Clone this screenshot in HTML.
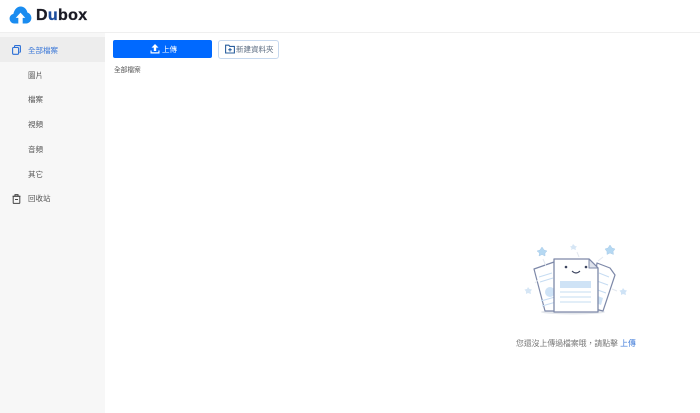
<!DOCTYPE html>
<html>
<head>
<meta charset="utf-8">
<style>
html,body{margin:0;padding:0;width:700px;height:413px;overflow:hidden;background:#fff;font-family:"Liberation Sans","Noto Sans CJK TC",sans-serif}
.abs{position:absolute;white-space:nowrap}
#header{position:absolute;left:0;top:0;width:700px;height:32px;background:#fff;border-bottom:1px solid #efefef;box-sizing:content-box}
#side{position:absolute;left:0;top:33px;width:105px;height:380px;background:#f7f7f7}
#active{position:absolute;left:0;top:37px;width:105px;height:25px;background:#ededed}
.nav{position:absolute;left:28px;font-size:7.500px;line-height:12px;color:#555;white-space:nowrap}
#btn{position:absolute;left:113px;top:40px;width:99px;height:18px;background:#0069ff;border-radius:2px}
#btn2{position:absolute;left:218px;top:40px;width:59px;height:17px;border:1px solid #c6d8ee;border-radius:3px;background:#fff}
</style>
</head>
<body>
<div id="header"></div>
<svg class="abs" style="left:9px;top:6px" width="23" height="18" viewBox="0 0 23 19">
<path d="M5 18.500C2 18.500 0 16 0 13.200C0 10.600 1.800 8.800 4 8.300C5 3.500 8 0.500 11.700 0.500C15.300 0.500 18 3.200 18.800 6.800C21.200 7.500 23 9.800 23 12.600C23 16 20.500 18.500 17.500 18.500Z" fill="#1a8cf0"/>
<path d="M11.500 7L16.500 12.500H13.800V19H9.200V12.500H6.500Z" fill="#fff"/>
</svg>
<div class="abs" style="left:36px;top:5px;font-size:16px;line-height:21px;font-weight:bold;letter-spacing:.35px;color:#1a1a24;-webkit-text-stroke:.3px #1a1a24">D<span style="color:#1f4f9e;-webkit-text-stroke:.3px #1f4f9e">u</span>box</div>
<div id="side"></div>
<div id="active"></div>
<svg class="abs" style="left:12px;top:45px" width="9" height="10" viewBox="0 0 9 10" fill="none" stroke="#2b6fd6" stroke-width="1.100">
<rect x=".6" y="2.500" width="6" height="6.800" rx="1"/>
<path d="M2.500 2.300V1.500Q2.500.6 3.400.6H7.500Q8.400.6 8.400 1.500V6.500Q8.400 7.300 7.400 7.300"/>
</svg>
<div class="nav" style="top:45px;color:#3b78d8">全部檔案</div>
<div class="nav" style="top:70px">圖片</div>
<div class="nav" style="top:94px">檔案</div>
<div class="nav" style="top:119px">視頻</div>
<div class="nav" style="top:144px">音頻</div>
<div class="nav" style="top:169px">其它</div>
<svg class="abs" style="left:12px;top:194px" width="9" height="10" viewBox="0 0 9 10" fill="none" stroke="#444" stroke-width="1">
<path d="M.5 2.200H8.500M3 2V.6H6V2"/>
<rect x="1.200" y="2.200" width="6.600" height="7.200" rx=".8"/>
<path d="M3 5.500H6"/>
</svg>
<div class="nav" style="top:193px">回收站</div>

<div id="btn"></div>
<svg class="abs" style="left:150px;top:44px" width="10" height="10" viewBox="0 0 10 10" fill="#fff">
<path d="M5 0L8.500 3.600H6.200V7H3.800V3.600H1.500Z"/>
<path d="M.5 6.500H1.600V8.300H8.400V6.500H9.500V9.500H.5Z"/>
</svg>
<div class="abs" style="left:162px;top:44px;font-size:7.500px;line-height:12px;color:#fff">上傳</div>
<div id="btn2"></div>
<svg class="abs" style="left:225px;top:44px" width="10" height="10" viewBox="0 0 10 10" fill="none" stroke="#2a5f9e" stroke-width="1.100">
<path d="M.6 1.200H3.800L4.800 2.400H9.400V9H.6Z"/>
<path d="M5 4V7.500M3.300 5.700H6.700"/>
</svg>
<div class="abs" style="left:236px;top:44px;font-size:7.500px;line-height:12px;color:#5a6b80">新建資料夾</div>
<div class="abs" style="left:114px;top:65px;font-size:6.700px;line-height:12px;color:#555">全部檔案</div>

<svg class="abs" style="left:515px;top:235px" width="120" height="85" viewBox="0 0 120 85">
<ellipse cx="58" cy="77" rx="32" ry="2.500" fill="#e4e7ec"/>
<path d="M19 34L39 27L47 76L30 76Z" fill="#fff" stroke="#7d88a8" stroke-width="1.200" stroke-linejoin="round"/>
<path d="M24 42L37 38M25 47L38 43M26 66L40 62M27 71L41 67" stroke="#c6dcf2" stroke-width="1"/>
<circle cx="35" cy="57" r="5" fill="#cfe3f6"/>
<path d="M82 28L95 33L100 40L88 76L76 73Z" fill="#fff" stroke="#7d88a8" stroke-width="1.200" stroke-linejoin="round"/>
<path d="M84 38L94 42M82 46L93 50M80 54L91 58" stroke="#c6dcf2" stroke-width="1"/>
<path d="M80 60L88 63L86 70L78 67Z" fill="#cfe3f6"/>
<path d="M39 24L74 24L83 33V77H39Z" fill="#fff" stroke="#7d88a8" stroke-width="1.300" stroke-linejoin="round"/>
<path d="M74 24V33H83Z" fill="#dfe3ec" stroke="#7d88a8" stroke-width="1" stroke-linejoin="round"/>
<circle cx="51" cy="32" r="1.300" fill="#3d4560"/>
<circle cx="71" cy="32" r="1.300" fill="#3d4560"/>
<path d="M57 36Q61 40 65 36" fill="none" stroke="#3d4560" stroke-width="1.100"/>
<rect x="45" y="46" width="31" height="7" fill="#cfe3f6"/>
<path d="M45 57H76M45 62H76M45 67H76" stroke="#c6dcf2" stroke-width="1.100"/>
<path d="M27 12L29 15L32 16L30 18L30 21L27 19.500L24 21L24.500 18L22 16L25 15Z" fill="#b5d8f2" stroke="#a9cbe8" stroke-width=".5"/>
<path d="M95 10L97 13L100 14L98 16.500L98.500 19.500L95 18L92 19.500L92 16.500L90 14L93 13Z" fill="#b5d8f2" stroke="#a9cbe8" stroke-width=".5"/>
<path d="M58 9L60 11L62 11.500L60.500 13L61 15L58 14L56 15L56.500 13L55 11.500L57 11Z" fill="#d6e6f5"/>
<path d="M13 52L14.500 54L17 54.500L15.500 56.500L16 59L13 58L11 59L11 56.500L9.500 54.500L12 54Z" fill="#d6e6f5"/>
<path d="M108 53L109.500 55L112 55.500L110.500 57.500L111 60L108 59L106 60L106 57.500L104.500 55.500L107 55Z" fill="#cfe3f6"/>
<path d="M28 24L31 31M88 22L83 26M62 17L64 22M20 48L23 45M97 54L102 56" stroke="#e3e8ef" stroke-width="1" fill="none"/>
</svg>
<div class="abs" style="left:516px;top:337px;font-size:7.850px;line-height:13px;color:#777">您還沒上傳過檔案哦，請點擊 <span style="color:#3b78d8">上傳</span></div>
</body>
</html>
